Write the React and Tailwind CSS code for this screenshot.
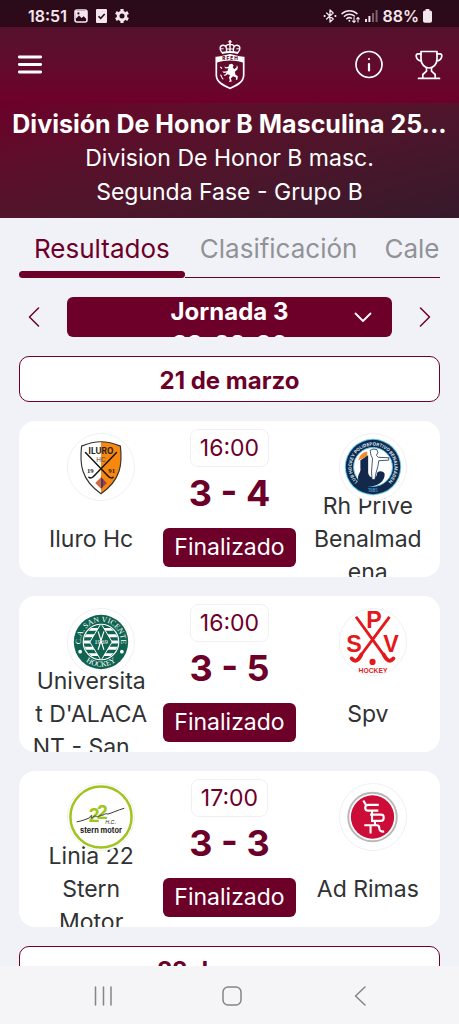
import React from "react";

const stroke = {
  fill: "none",
  stroke: "currentColor",
  strokeLinecap: "round",
  strokeLinejoin: "round",
};

function StatusBar() {
  return (
    <div className="flex h-[27px] items-center justify-between bg-black/45 pt-1 pr-[27px] pl-7 text-[#f3e6ec]">
      <div className="flex items-center gap-[7px]">
        <span className="text-base font-semibold">18:51</span>
        <svg width="14" height="14" viewBox="0 0 14 14" aria-hidden="true">
          <rect x="1" y="1" width="12" height="12" rx="2" fill="none" stroke="currentColor" strokeWidth="1.6" />
          <path d="M1 2h12v8.5L9.6 7.2 7.6 9 5 6.6 2 9.5z" fill="currentColor" />
          <circle cx="4.4" cy="4.4" r="1.1" fill="#2e0a19" />
          <path d="M2 11.6l3-3 2.4 2.2 2.2-1.6 2.6 2.6z" fill="#2e0a19" />
        </svg>
        <svg width="13" height="14" viewBox="0 0 13 14" aria-hidden="true">
          <rect x="1" width="11" height="14" rx="1" fill="currentColor" />
          <path d="M3.5 7.2l2.2 2.2 4-4.4" fill="none" stroke="#2e0a19" strokeWidth="1.6" />
        </svg>
        <svg width="14" height="14" viewBox="0 0 14 14" aria-hidden="true">
          <circle cx="7" cy="7" r="3.9" fill="none" stroke="currentColor" strokeWidth="2.8" />
          <g stroke="currentColor" strokeWidth="3.2">
            <path d="M7 0v2.4M7 11.6V14M.9 3.5l2.1 1.2M11 9.3l2.1 1.2M.9 10.5L3 9.3M11 4.7l2.1-1.2" />
          </g>
        </svg>
      </div>
      <div className="flex items-center gap-1">
        <svg width="14" height="14" viewBox="0 0 14 14" aria-hidden="true" {...stroke} strokeWidth="1.3">
          <path d="M3.6 4l6.6 6L7 13V1l3.2 3-6.6 6" />
          <path d="M1.4 7h.4M12.2 7h.4" strokeWidth="1.8" />
        </svg>
        <svg width="20" height="14" viewBox="0 0 20 14" aria-hidden="true" {...stroke} strokeWidth="1.5">
          <path d="M1 4.6a11 11 0 0 1 15 0M3.4 7.2a7.6 7.6 0 0 1 10-.2M5.8 9.7a4 4 0 0 1 4.6-.5" />
          <circle cx="8.4" cy="11.8" r="1" fill="currentColor" stroke="none" />
          <path d="M13 8.6v4.6M11.6 12l1.4 1.3 1.3-1.3M17 13V8.6M15.7 9.8L17 8.5l1.3 1.3" strokeWidth="1.1" />
        </svg>
        <svg width="13" height="13" viewBox="0 0 13 13" aria-hidden="true" fill="currentColor">
          <rect x="0" y="10" width="2" height="3" />
          <rect x="3.4" y="7" width="2" height="6" />
          <rect x="7" y="4" width="2" height="9" opacity=".4" />
          <rect x="10.6" y="1" width="2" height="12" opacity=".4" />
        </svg>
        <span className="text-base font-semibold">88%</span>
        <svg width="9" height="14" viewBox="0 0 9 14" aria-hidden="true" fill="currentColor">
          <rect x="2.6" y="0" width="3.8" height="2" rx=".6" />
          <rect x="0" y="1.4" width="9" height="12.4" rx="1.8" />
        </svg>
      </div>
    </div>
  );
}

function Crest() {
  return (
    <svg width="30" height="50" viewBox="0 0 30 50" aria-label="RFEH" role="img">
      <g fill="none" stroke="#fff" strokeWidth="1.4">
        <path d="M15 0v4.4M13.4 1.8h3.2" />
        <path d="M7 12.5C4 9.5 4.6 5 8.5 5.2 11 5.4 12 8 11.6 12M23 12.5c3-3 2.4-7.5-1.5-7.3-2.5.2-3.5 2.8-3.1 6.8M11 6.2C12 3.8 18 3.8 19 6.2M15 4.5v7.5" />
        <path d="M5.6 8.8h3M21.4 8.8h3M12 9h6" strokeWidth="1" />
        <path d="M6.8 13Q15 10.8 23.2 13" strokeWidth="2" />
        <path d="M1.3 17.5C6 17.5 10 16 15 14.9c5 1.1 9 2.6 13.7 2.6V35c0 7-6.5 10-13.7 13.4C7.8 45 1.3 42 1.3 35z" strokeWidth="1.7" />
      </g>
      <path d="M1.3 17.5C6 17.5 10 16 15 14.9c5 1.1 9 2.6 13.7 2.6v5.3C24 21.3 19 20.6 15 20.6S6 21.3 1.3 22.8z" fill="#fff" />
      <text x="15" y="20" textAnchor="middle" fontSize="4.8" fontWeight="800" fill="#5f0829">R F E H</text>
      <path
        d="M14 24.5l3-.8 1.7 1.7-1 1.5 1.5 2.3 2.3-1.7.2-2.2 1.2 1.7-.5 2.5-2.6 2.2.6 2.9 2.4 1.6-.4 3.4-1.6.5.3-2.6-3.2-1.2-2 2.1.9 3-2.9.5.9-1.6-.8-2.9 1-2.5-2.5-.7-2.6 1.8-1.3-1 2-.8.9-1.6-2.6.4-1.8-1.6 3.1.1 2.2-.6 1-2.6-2.8.2-1.5-1.9 2.6.6 2-.7z"
        fill="#fff"
      />
      <path d="M8.3 39.2c-2.2-1-1.4-3.6-3-4.4M7 28.5l-1.8-1.6" stroke="#fff" strokeWidth="1.1" fill="none" />
    </svg>
  );
}

function Header() {
  return (
    <header className="bg-[#5c0929] text-white">
      <div className="bg-linear-to-b from-[#4d142e] to-[#6e002a]">
        <StatusBar />
        <div className="grid h-[76px] grid-cols-[1fr_auto_1fr] items-center px-4">
          <button type="button" aria-label="Menú" className="justify-self-start">
            <svg width="28" height="28" viewBox="0 0 28 28" {...stroke} strokeWidth="2.8">
              <path d="M3.3 6h21.400M3.3 13.5h21.400M3.3 21h21.400" />
            </svg>
          </button>
          <Crest />
          <div className="flex gap-8 justify-self-end">
            <button type="button" aria-label="Información">
              <svg width="28" height="30" viewBox="0 0 28 30" {...stroke} strokeWidth="1.7">
                <circle cx="14" cy="14.5" r="13" />
                <path d="M14 14v6.5" strokeWidth="2.2" />
                <circle cx="14" cy="9" r=".5" strokeWidth="1.2" />
              </svg>
            </button>
            <button type="button" aria-label="Competición">
              <svg width="28" height="30" viewBox="0 0 28 30" {...stroke} strokeWidth="1.7">
                <path d="M6 1.5h16v7.5c0 5-3.5 9-8 9s-8-4-8-9z" />
                <path d="M6 3.8H2.6C.2 3.8.6 10.6 6.4 11M22 3.8h3.4c2.4 0 2 6.8-3.8 7.2" />
                <path d="M11.5 18v3.2L7.8 24.5v3.8M16.5 18v3.2l3.7 3.3v3.8M3.5 28.4h21" />
              </svg>
            </button>
          </div>
        </div>
      </div>
      <div className="bg-linear-165 from-[#6c0029] to-[#36192b] px-2 pt-1 pb-[9px] text-center">
        <h1 className="overflow-hidden text-[25px] leading-[34px] font-bold whitespace-nowrap">
          División De Honor B Masculina 25...
        </h1>
        <p className="text-[23px] leading-[34px]">Division De Honor B masc.</p>
        <p className="text-[23px] leading-[34px]">Segunda Fase - Grupo B</p>
      </div>
    </header>
  );
}

function Tabs() {
  return (
    <nav className="flex h-[60px] overflow-hidden text-[26px] whitespace-nowrap">
      <a href="#resultados" aria-current="page" className="flex flex-col justify-end gap-1 text-[#6c0029]">
        <span className="px-[15px] leading-9">Resultados</span>
        <span className="h-[7px] rounded-[4px] bg-[#6c0029]" />
      </a>
      <div className="flex min-w-0 flex-1 overflow-hidden border-b border-[#6c0029] pb-[10px] text-[#919296]">
        <a href="#clasificacion" className="flex items-end px-[15px] leading-9">Clasificación</a>
        <a href="#calendario" className="flex items-end pl-3 leading-9">Calendario</a>
      </div>
    </nav>
  );
}

function Chevron({ d, label }) {
  return (
    <button type="button" aria-label={label} className="flex w-[30px] justify-center text-[#6c0029]">
      <svg width="12" height="20" viewBox="0 0 12 20" {...stroke} strokeWidth="1.5">
        <path d={d} />
      </svg>
    </button>
  );
}

function RoundPicker() {
  return (
    <div className="mt-[19px] flex items-center gap-[18px]">
      <Chevron label="Jornada anterior" d="M10.5 1L1.5 10l9 9" />
      <button
        type="button"
        className="relative h-10 flex-1 overflow-hidden rounded-md bg-[#6c0029] text-2xl font-bold text-white"
      >
        <span className="-mt-1 flex h-full flex-col leading-[33px]">
          <span>Jornada 3</span>
          <span>22-03-26</span>
        </span>
        <svg className="absolute top-[15px] right-5" width="18" height="12" viewBox="0 0 18 12" {...stroke} strokeWidth="1.8">
          <path d="M1.5 1.5L9 9l7.5-7.5" />
        </svg>
      </button>
      <Chevron label="Jornada siguiente" d="M1.5 1l9 9-9 9" />
    </div>
  );
}

function DateHeading({ children }) {
  return (
    <h2 className="flex h-[46px] shrink-0 items-center justify-center rounded-[10px] border border-[#6c0029] bg-white pt-1 text-2xl font-bold text-[#6c0029]">
      {children}
    </h2>
  );
}

function IluroLogo() {
  const shield = "M34 8c7 0 14 2 20 4.5C56 30 55 47 34 61.5 13 47 12 30 14 12.5 20 10 27 8 34 8z";
  return (
    <svg viewBox="0 0 68 68" className="size-full">
      <path d={shield} fill="#fff" />
      <path d="M34 8c7 0 14 2 20 4.5C56 30 55 47 34 61.5z" fill="#f8870f" />
      <path d={shield} fill="none" stroke="#333" strokeWidth="1.2" />
      <text x="34" y="21" textAnchor="middle" fontSize="8.5" fontWeight="700" fill="#222">ILURO</text>
      <text x="34" y="28.5" textAnchor="middle" fontSize="6.5" fill="#444">HC</text>
      <path d="M18 19l21 22q5 6 7.5 3.5M50 19L29 41q-5 6-7.5 3.5" fill="none" stroke="#151515" strokeWidth="1.5" strokeLinecap="round" />
      <text x="23" y="40" textAnchor="middle" fontSize="7" fontWeight="700" fontFamily="Liberation Serif, serif" fill="#222">19</text>
      <text x="45" y="40" textAnchor="middle" fontSize="7" fontWeight="700" fontFamily="Liberation Serif, serif" fill="#222">91</text>
      <path d="M34 44.5L28 50.5l6 6z" fill="#d2693c" />
      <path d="M34 44.5l6 6-6 6z" fill="#a33a50" />
      <path d="M34 44.5l2 2v8l-2 2z" fill="#39406e" />
    </svg>
  );
}

function BenalmadenaLogo() {
  return (
    <svg viewBox="0 0 68 68" className="size-full">
      <defs>
        <path id="benalmadena-ring" d="M19 50A22 22 0 1 1 49 50" />
      </defs>
      <circle cx="34" cy="34" r="29" fill="#5ec5ec" />
      <circle cx="34" cy="34" r="28" fill="#12294c" />
      <circle cx="34" cy="34" r="20" fill="#fff" stroke="#5ec5ec" strokeWidth="1" />
      <text fontSize="4.6" fontWeight="700" fill="#d5ecf7">
        <textPath href="#benalmadena-ring" startOffset="50%" textAnchor="middle">CLUB HOCKEY POLIDEPORTIVO BENALMÁDENA</textPath>
      </text>
      <text x="34" y="60" textAnchor="middle" fontSize="4.5" fill="#5ec5ec">1985</text>
      <path d="M19 27c1-5 4-8 9-9v5z" fill="#f38b2c" />
      <path d="M21 27l8-5v17c0 7 8 8 9 3-1-4 6-5 8-1 1 13-21 18-27 7-2-6 3-8 2-13z" fill="#12294c" />
      <path
        d="M31 17l3-1.5 4 .5 1 3-1.5 3 2 2 11 .5-.5 2.5-10 .5-1 6-2 7-1 6.5-3 0-.5-8 .5-7 .5-7-1.500-3z"
        fill="#fff"
        stroke="#12294c"
        strokeWidth=".8"
      />
    </svg>
  );
}

function SanVicenteLogo() {
  return (
    <svg viewBox="0 0 68 68" className="size-full">
      <defs>
        <path id="vicente-top" d="M14.5 41A20.7 20.7 0 1 1 53.5 41" />
        <path id="vicente-bottom" d="M10 42A25.3 25.3 0 0 0 58 42" />
        <clipPath id="vicente-core"><circle cx="34" cy="34" r="17.5" /></clipPath>
      </defs>
      <circle cx="34" cy="34" r="28" fill="#0f6350" />
      <circle cx="34" cy="34" r="18.3" fill="none" stroke="#fff" strokeWidth="1.2" />
      <g clipPath="url(#vicente-core)">
        <path d="M14 21h40M14 27.5h40M14 34h40M14 40.5h40M14 47h40" stroke="#fff" strokeWidth="3" />
        <path d="M34 15l11.5 19L34 53 22.5 34z" fill="#0f6350" stroke="#fff" strokeWidth="1" />
      </g>
      <path d="M31 23l6 19M37 23l-6 19" stroke="#fff" strokeWidth="1.2" />
      <text x="34" y="36.5" textAnchor="middle" fontSize="7" fontFamily="Liberation Serif, serif" fill="#fff">1969</text>
      <text fontSize="8" fontFamily="Liberation Serif, serif" fill="#fff">
        <textPath href="#vicente-top" startOffset="50%" textAnchor="middle">C.A. SAN VICENTE</textPath>
      </text>
      <text fontSize="8" fontFamily="Liberation Serif, serif" fill="#fff">
        <textPath href="#vicente-bottom" startOffset="50%" textAnchor="middle">HOCKEY</textPath>
      </text>
      <circle cx="12.5" cy="44" r="1.9" fill="#fff" />
      <circle cx="55.5" cy="44" r="1.9" fill="#fff" />
    </svg>
  );
}

function SpvLogo() {
  return (
    <svg viewBox="0 0 68 68" className="size-full">
      <g fill="none" stroke="#e3191b" strokeLinecap="butt">
        <path d="M16.5 8L47 50M51 8L19 51" strokeWidth="3" />
        <path d="M45 47q5 10 10 4M22 47q-5 10-10 4" strokeWidth="4" strokeLinecap="round" />
      </g>
      <g fill="#e3191b" fontFamily="Liberation Sans, sans-serif" fontWeight="700">
        <text x="35" y="20" textAnchor="middle" fontSize="24">P</text>
        <text x="14.5" y="44" textAnchor="middle" fontSize="24">S</text>
        <text x="52.5" y="44" textAnchor="middle" fontSize="24">V</text>
        <text x="34" y="66" textAnchor="middle" fontSize="7">HOCKEY</text>
      </g>
      <circle cx="33.5" cy="54.5" r="3.2" fill="#e3191b" />
    </svg>
  );
}

function LiniaLogo() {
  return (
    <svg viewBox="0 0 68 68" className="size-full">
      <circle cx="34" cy="34" r="31.5" fill="#fff" stroke="#a1c420" strokeWidth="2.6" />
      <g fill="#a1c420" fontFamily="Liberation Sans, sans-serif" fontWeight="700">
        <text x="21.5" y="39" fontSize="20">2</text>
        <text x="30" y="36.5" fontSize="20">2</text>
      </g>
      <path d="M9 39c6-1 10-3 13-4 2-3 3-4 2-1 0 3 2-1 4-1 2 0 1 2 4 0s2 0 4-1 4-2 5-1c4-1 10-4 17-6" fill="none" stroke="#333" strokeWidth="1" />
      <text x="38.5" y="41.5" fontSize="5.5" fontStyle="italic" fill="#333">H.C.</text>
      <text x="34" y="50.5" textAnchor="middle" fontSize="7.6" fontWeight="700" fill="#222">stern motor</text>
    </svg>
  );
}

function RimasLogo() {
  return (
    <svg viewBox="0 0 68 68" className="size-full">
      <circle cx="33.5" cy="34" r="25" fill="#fff" stroke="#b8b8b8" strokeWidth="2" />
      <circle cx="33.5" cy="34" r="22.3" fill="#cb0d37" />
      <g fill="none" stroke="#fff" strokeWidth="2.2">
        <path d="M24 17l3 5M40 21.5H29q-3 0-3 3t3 3h10.500" />
        <path d="M33 27v11h9q3 0 3-3v-1q0-2.5-3-2.5H31" />
        <path d="M25 42.5h13q2.5 0 2.5 3 0 4 5 3.5M31.5 42v9M36 38v5" />
      </g>
    </svg>
  );
}

const matches = [
  {
    time: "16:00",
    score: "3 - 4",
    home: { name: "Iluro Hc", Logo: IluroLogo },
    away: { name: "Rh Prive\nBenalmad\nena", Logo: BenalmadenaLogo },
  },
  {
    time: "16:00",
    score: "3 - 5",
    home: { name: "Universita\nt D'ALACA\nNT - San…", Logo: SanVicenteLogo },
    away: { name: "Spv", Logo: SpvLogo },
  },
  {
    time: "17:00",
    score: "3 - 3",
    home: { name: "Linia 22\nStern\nMotor", Logo: LiniaLogo },
    away: { name: "Ad Rimas", Logo: RimasLogo },
  },
];

function Team({ team, logoClass }) {
  const { Logo, name } = team;
  return (
    <div className="flex h-full min-h-0 min-w-0 flex-col items-center pt-3 text-center">
      <div className={`z-10 size-[68px] shrink-0 overflow-hidden rounded-full border border-[#f0f0f2] bg-white ${logoClass}`}>
        <Logo />
      </div>
      <div className="flex min-h-0 flex-1 items-center">
        <p className="text-[23px] leading-[33px] whitespace-pre text-[#303233]">{name}</p>
      </div>
    </div>
  );
}

function MatchCard({ match }) {
  return (
    <article className="grid h-[156px] shrink-0 grid-cols-[1fr_auto_1fr] grid-rows-1 overflow-hidden rounded-2xl bg-white">
      <Team team={match.home} logoClass="ml-5" />
      <div className="flex flex-col items-center pt-2 text-[#6c0029]">
        <time className="rounded-lg border border-[#f0f0f2] px-[9px] text-[23px] leading-9">{match.time}</time>
        <strong className="mt-1 text-4xl leading-[44px] font-bold">{match.score}</strong>
        <span className="mt-[13px] rounded-md bg-[#6c0029] px-[11px] text-[23px] leading-[39px] text-white">Finalizado</span>
      </div>
      <Team team={match.away} logoClass="ml-[10px]" />
    </article>
  );
}

function SystemNav() {
  return (
    <nav aria-label="Sistema" className="flex h-[58px] shrink-0 items-center justify-between bg-[#f5f5f8] pt-px pr-[86px] pl-[90px] text-[#858588]">
      <button type="button" aria-label="Recientes">
        <svg width="26" height="20" viewBox="0 0 26 20" {...stroke} strokeWidth="1.5">
          <path d="M5.5 1v18M13.5 1v18M21 1v18" />
        </svg>
      </button>
      <button type="button" aria-label="Inicio">
        <svg width="26" height="20" viewBox="0 0 26 20" {...stroke} strokeWidth="1.5">
          <rect x="4" y="1" width="18" height="18" rx="5" />
        </svg>
      </button>
      <button type="button" aria-label="Atrás">
        <svg width="26" height="20" viewBox="0 0 26 20" {...stroke} strokeWidth="1.5">
          <path d="M18 1L8.5 10l9.500 9" />
        </svg>
      </button>
    </nav>
  );
}

export default function App() {
  return (
    <div className="flex h-screen flex-col bg-[#f1f2f7] font-['Inter',sans-serif]">
      <Header />
      <main className="min-h-0 flex-1 overflow-hidden px-[19px]">
        <Tabs />
        <RoundPicker />
        <div className="mt-[19px] flex flex-col gap-[19px]">
          <DateHeading>21 de marzo</DateHeading>
          {matches.map((match) => (
            <MatchCard key={match.home.name} match={match} />
          ))}
          <DateHeading>22 de marzo</DateHeading>
        </div>
      </main>
      <SystemNav />
    </div>
  );
}
